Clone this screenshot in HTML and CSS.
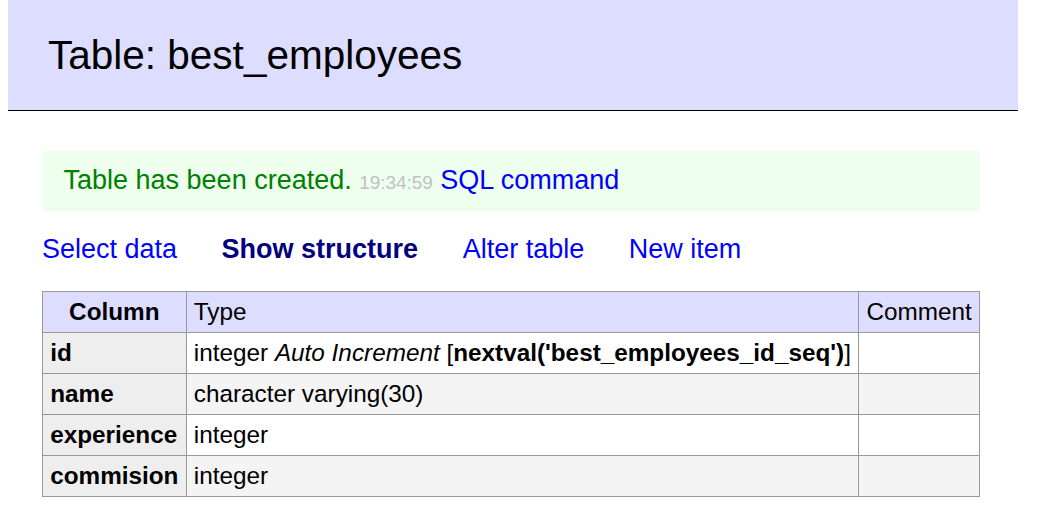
FILE: index.html
```html
<!DOCTYPE html>
<html>
<head>
<meta charset="utf-8">
<title>Table: best_employees</title>
<link rel="stylesheet" href="styles.css">
</head>
<body>
<div class="page">
  <h2 class="title">Table: best_employees</h2>
  <div class="content">
    <p class="message">Table has been created. <span class="time">19:34:59</span> <a href="#">SQL command</a></p>
    <p class="links">
      <a href="#">Select data</a>
      <a href="#" class="active">Show structure</a>
      <a href="#">Alter table</a>
      <a href="#">New item</a>
    </p>
    <table class="structure">
      <thead>
        <tr><th>Column</th><td class="type">Type</td><td class="comment">Comment</td></tr>
      </thead>
      <tbody>
        <tr><th>id</th><td>integer <i>Auto Increment</i> [<b>nextval('best_employees_id_seq')</b>]</td><td></td></tr>
        <tr><th>name</th><td>character varying(30)</td><td></td></tr>
        <tr><th>experience</th><td>integer</td><td></td></tr>
        <tr><th>commision</th><td>integer</td><td></td></tr>
      </tbody>
    </table>
  </div>
</div>
</body>
</html>
```

FILE: styles.css
```css
body {
  margin: 0;
  color: #000;
  background: #fff;
  font: 27px/1.25 "Liberation Sans", Arial, sans-serif;
}

a {
  color: blue;
  text-decoration: none;
}

.page {
  width: 1010px;
  margin-left: 8px;
}

.title {
  margin: 0;
  padding: 32px 40px;
  font-size: 40.5px;
  line-height: 46px;
  font-weight: normal;
  background: #ddf;
  border-bottom: 1px solid #000;
}

.content {
  margin: 40px 38px 0 34px;
}

.message {
  margin: 0;
  padding: 13.2px 21.5px;
  background: #efe;
  color: green;
}

.time {
  color: silver;
  font-size: 18.9px;
}

.links {
  margin: 22px 0 0;
  display: flex;
  gap: 44.5px;
}

.links a {
  white-space: nowrap;
}

.links a.active {
  color: navy;
  font-weight: bold;
}

.structure {
  margin-top: 24px;
  width: 100%;
  border-collapse: collapse;
  font-size: 24.3px;
  line-height: 1.25;
}

.structure th,
.structure td {
  border: 1px solid #999;
  padding: 4.86px 7.2px;
  text-align: left;
}

.structure th {
  background: #eee;
}

.structure thead th,
.structure thead td {
  background: #ddf;
}

.structure thead th {
  text-align: center;
  padding: 4.86px 12px;
}

.structure thead td {
  font-weight: normal;
}

.structure tbody tr:nth-child(2n) td {
  background: #f4f4f4;
}

.structure td.comment {
  width: 1%;
  white-space: nowrap;
}
```
